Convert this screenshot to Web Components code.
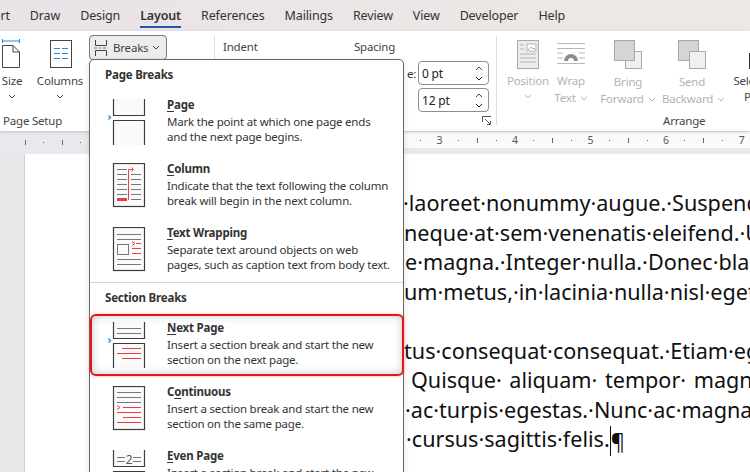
<!DOCTYPE html>
<html lang="en"><head><meta charset="utf-8"><title>Breaks menu</title>
<style>
html,body{margin:0;padding:0;width:750px;height:472px;overflow:hidden;background:#e8e8ea}
body{font-family:"Noto Sans","Open Sans",sans-serif;font-size:11.500px;letter-spacing:-.2px;color:#2e2e2e}
svg{display:block}
</style></head><body>
<word-app>
  <tab-bar>
    <tab-item style="margin-left:-24px">Insert</tab-item><tab-item>Draw</tab-item><tab-item>Design</tab-item><tab-item active>Layout</tab-item><tab-item>References</tab-item><tab-item>Mailings</tab-item><tab-item>Review</tab-item><tab-item>View</tab-item><tab-item>Developer</tab-item><tab-item>Help</tab-item>
  </tab-bar>
  <ribbon-bar>
    <ribbon-group label="Page Setup" w="215" lp="3">
      <ribbon-btn w="24"><svg slot="icon" width="24" height="30" viewBox="0 0 24 30" style="margin-top:-1px"><path d="M2.500 2h17M2.500 0v4M19.500 0v4" stroke="#2b88d8" fill="none"/><path d="M2.500 6.500H13l6.500 6.500v15.500H2.500z" fill="#fff" stroke="#444"/><path d="M13 6.500V13h6.500" fill="none" stroke="#444"/></svg>Size<chev-ron block></chev-ron></ribbon-btn>
      <ribbon-btn w="48" style="margin-left:12px"><svg slot="icon" width="24" height="28" viewBox="0 0 24 28"><rect x="2.500" y=".5" width="21" height="27" fill="#fff" stroke="#444"/><path d="M6 8.500h6M14 8.500h6M6 13.500h6M14 13.500h6M6 18.500h6M14 18.500h6" stroke="#2b88d8"/></svg>Columns<chev-ron block></chev-ron></ribbon-btn>
      <breaks-btn>Breaks</breaks-btn>
    </ribbon-group>
    <ribbon-group w="282" launcher label="">
      <spacing-panel></spacing-panel>
    </ribbon-group>
    <ribbon-group label="Arrange" w="253" lp="166" pad="7">
      <ribbon-btn w="48" disabled><svg slot="icon" width="22" height="29" viewBox="0 0 22 29"><rect x=".5" y=".5" width="21" height="28" fill="#ececec" stroke="#a8a8a8"/><rect x="10" y="4" width="9" height="7" fill="#fff" stroke="#b5b5b5"/><path d="M11 10l3-3 2 2 1-1 2 2" stroke="#b0b0b0" fill="none"/><path d="M3 5h4M3 9h4M3 14h16M3 18h16M3 22h16" stroke="#b5b5b5"/></svg>Position<chev-ron block></chev-ron></ribbon-btn>
      <ribbon-btn w="38" disabled><svg slot="icon" width="30" height="26" viewBox="0 0 30 26" style="margin-top:3px"><path d="M1 .500h28M1 5.500h28M1 10h6M1 15h6M1 20.500h28M23 10h6M23 15h6" stroke="#b8b8b8" fill="none"/><path d="M8 18a7 7 0 0 1 14 0h-4a3 3 0 0 0-6 0z" fill="#8d8d8d"/></svg>Wrap<br>Text<chev-ron></chev-ron></ribbon-btn>
      <ribbon-btn w="56" disabled style="margin-left:10px"><svg slot="icon" width="28" height="29" viewBox="0 0 28 29"><rect x="11.500" y="11.500" width="16" height="17" fill="#f0f0f0" stroke="#a8a8a8"/><rect x=".5" y=".5" width="20" height="20" fill="#d5d5d5" stroke="#a8a8a8"/></svg><span style="padding-top:1px;display:block">Bring<br>Forward<chev-ron></chev-ron></span></ribbon-btn>
      <ribbon-btn w="60" disabled style="margin-left:6px"><svg slot="icon" width="28" height="29" viewBox="0 0 28 29"><rect x=".5" y=".5" width="20" height="20" fill="#d5d5d5" stroke="#a8a8a8"/><rect x="11.500" y="11.500" width="16" height="17" fill="#f0f0f0" stroke="#a8a8a8"/></svg><span style="padding-top:1px;display:block">Send<br>Backward<chev-ron></chev-ron></span></ribbon-btn>
      <ribbon-btn w="52" style="margin-left:9px"><svg slot="icon" width="18" height="29" viewBox="0 0 18 29" style="margin-left:2px"><rect x=".5" y="13.500" width="16" height="15" fill="#fff" stroke="#333"/></svg>Selection<br>Pane</ribbon-btn>
    </ribbon-group>
  </ribbon-bar>
  <ruler-bar></ruler-bar>
  <doc-area>
    <doc-line pad="-1">·laoreet·nonummy·augue.·Suspendisse</doc-line>
    <doc-line>neque·at·sem·venenatis·eleifend.·Ut</doc-line>
    <doc-line pad="1">e·magna.·Integer·nulla.·Donec·blandit</doc-line>
    <doc-line>um·metus,·in·lacinia·nulla·nisl·eget</doc-line>
    <doc-line></doc-line>
    <doc-line>tus·consequat·consequat.·Etiam·eget</doc-line>
    <doc-line pad="7" style="word-spacing:2px">Quisque· aliquam· tempor· magna</doc-line>
    <doc-line pad="1">·ac·turpis·egestas.·Nunc·ac·magna</doc-line>
    <doc-line pad="2">·cursus·sagittis·felis.<span style="border-left:1px solid #111;display:inline-block;height:30px;line-height:30px;vertical-align:middle">¶</span></doc-line>
  </doc-area>
  <break-menu>
    <menu-head>Page Breaks</menu-head>
    <break-item h="64" key="P" rest="age" l1="Mark the point at which one page ends" l2="and the next page begins."><svg width="44" height="46" viewBox="0 0 44 46"><path d="M8.500 0h31v16h-31z" fill="#fafafa"/><path d="M8.500 0v16.500h31V0M8.500 46V21.500h31V46" fill="#fafafa" stroke="#3c3c3c" stroke-width="1.200"/><path d="M3.500 16.500l2 2-2 2" stroke="#2b88d8" stroke-width="1.300" fill="none"/></svg></break-item>
    <break-item h="64" key="C" rest="olumn" l1="Indicate that the text following the column" l2="break will begin in the next column."><svg width="44" height="46" viewBox="0 0 44 46"><rect x="8.500" y=".5" width="31" height="43" fill="#fafafa" stroke="#3c3c3c" stroke-width="1.200"/><path d="M12 6.500h10M12 11.500h10M12 16.500h10M12 21.500h10M12 26.500h10M12 31.500h10M26 11.500h10M26 16.500h10M26 21.500h10M26 26.500h10M26 31.500h10M26 36.500h10" stroke="#777"/><rect x="12" y="35" width="10" height="3" fill="#ee3b3b"/><path d="M23.500 37V6.500H28M26.500 4.500l2 2-2 2" stroke="#e84545" fill="none"/></svg></break-item>
    <break-item h="56" key="T" rest="ext Wrapping" l1="Separate text around objects on web" l2="pages, such as caption text from body text."><svg width="44" height="46" viewBox="0 0 44 46"><rect x="8.500" y=".5" width="31" height="43" fill="#fafafa" stroke="#3c3c3c" stroke-width="1.200"/><path d="M12 7.500h24M12 12.500h24M12 32.500h24M12 37.500h24" stroke="#777"/><rect x="12.500" y="17.500" width="11" height="10" fill="none" stroke="#777"/><path d="M27 14.500l3 2-3 2M31 16.500h5M27 21.500h9M27 26.500h9" stroke="#e84545" fill="none"/></svg></break-item>
    <menu-rule></menu-rule>
    <menu-head>Section Breaks</menu-head>
    <break-item h="64" highlight key="N" rest="ext Page" l1="Insert a section break and start the new" l2="section on the next page."><svg width="44" height="46" viewBox="0 0 44 46"><path d="M8.500 0v16.500h31V0M8.500 46V21.500h31V46" fill="#fafafa" stroke="#3c3c3c" stroke-width="1.200"/><path d="M12 6.500h24M12 11.500h24" stroke="#777"/><path d="M17 26.500h19M12 31.500h24M17 36.500h19" stroke="#ee3b3b"/><path d="M3.500 16.500l2 2-2 2" stroke="#2b88d8" stroke-width="1.300" fill="none"/></svg></break-item>
    <break-item h="64" key="" pre="C" mid="o" rest="ntinuous" l1="Insert a section break and start the new" l2="section on the same page."><svg width="44" height="46" viewBox="0 0 44 46"><rect x="8.500" y=".5" width="31" height="43" fill="#fafafa" stroke="#3c3c3c" stroke-width="1.200"/><path d="M12 6.500h24M12 11.500h24M12 16.500h24" stroke="#777"/><path d="M12 19.500l3 2-3 2M18 21.500h18M12 26.500h24M18 31.500h18M12 36.500h24" stroke="#ee3b3b" fill="none"/></svg></break-item>
    <break-item h="64" key="E" rest="ven Page" l1="Insert a section break and start the new" l2="section on the odd page."><svg width="44" height="46" viewBox="0 0 44 46"><path d="M8.500 0v16.500h31V0M8.500 46V21.500h31V46" fill="#fafafa" stroke="#3c3c3c" stroke-width="1.200"/><path d="M12 7.500h8M12 11.500h8M28 7.500h8M28 11.500h8" stroke="#777"/><text x="24" y="14" text-anchor="middle" font-family="Noto Sans" font-size="12" fill="#555">2</text></svg></break-item>
  </break-menu>
</word-app>
<script>
function def(name, css, html, init){
  customElements.define(name, class extends HTMLElement{
    connectedCallback(){
      if(this.shadowRoot) return;
      const s=this.attachShadow({mode:'open'});
      const h=typeof html==='function'?html(this):html;
      s.innerHTML='<style>'+css+'</style>'+h;
      if(init) init(this,s);
    }
  });
}
const chevD='<svg width="8" height="5" viewBox="0 0 8 5"><path d="M1 1l3 3 3-3" fill="none" stroke="currentColor" stroke-width="1"/></svg>';
def('word-app',':host{display:flex;flex-direction:column;position:relative;width:750px;height:472px;overflow:hidden}','<slot></slot>');
def('tab-bar',':host{display:flex;gap:20px;height:31px;flex:none;background:linear-gradient(90deg,#e9e3e8,#eee8e4);white-space:nowrap;font-size:12.500px;letter-spacing:-.14px;color:#333;padding-left:0;overflow:hidden}','<slot></slot>');
def('tab-item',':host{display:block;position:relative;line-height:31px;height:31px}:host([active]){font-weight:600;color:#333}:host([active])::after{content:"";position:absolute;left:0;right:0;top:26px;height:2px;background:#2257a8}','<slot></slot>');
def('ribbon-bar',':host{display:flex;height:100px;flex:none;background:#fff;box-shadow:0 1px 3px rgba(0,0,0,.18);position:relative;z-index:1;overflow:hidden}','<slot></slot>');
def('ribbon-group',`:host{display:flex;flex-direction:column;flex:none;box-sizing:border-box;margin:5px 0 6px;border-right:1px solid #dcdcdc}
:host(:last-child){border:none}
.row{flex:1;display:flex;min-height:0;align-items:flex-start}
.foot{height:16px;line-height:16px;margin-bottom:-4px;display:flex;justify-content:space-between;white-space:nowrap;color:#444}
.foot svg{display:block;margin:-1px 4px 0 0}`,
 h=>{const w=h.getAttribute('w');h.style.width=w+'px';
   return `<div class="row" style="padding-left:${h.getAttribute('pad')||0}px"><slot></slot></div><div class="foot" style="padding-left:${h.getAttribute('lp')||0}px"><span>${h.getAttribute('label')||''}</span>${h.hasAttribute('launcher')?'<svg width="10" height="10" viewBox="0 0 10 10" style="margin-left:auto;margin-top:3px"><path d="M.5 6V.5H9M3 3l5 5M8.500 5v3.500H5" fill="none" stroke="#555"/></svg>':''}</div>`});
def('ribbon-btn',`:host{display:block;flex:none;text-align:center;line-height:16px;white-space:nowrap;color:#444;padding-top:4px}
:host([disabled]){color:#b3b3b3}
.ic{height:33px;display:flex;justify-content:center;align-items:flex-start}`,
 h=>{h.style.width=h.getAttribute('w')+'px';return '<div class="ic"><slot name="icon"></slot></div><slot></slot>'});
def('chev-ron',`:host{display:inline-block;width:8px;margin-left:4px;vertical-align:1px}:host([block]){display:flex;justify-content:center;width:auto;margin:5px 0 0}`,chevD);
def('breaks-btn',`:host{display:flex;align-items:center;box-sizing:border-box;margin:-1px 0 0 5px;width:78px;height:25px;background:#ececec;border:1px solid #7a7a7a;border-radius:4px;color:#444;flex:none;padding-left:4px;gap:5px}
svg{display:block} .c{margin-left:-1px;display:flex}`,
 `<svg width="14" height="16" viewBox="0 0 14 16"><path d="M1.500 0v5.500h11V0M1.500 16v-5.500h11V16" fill="none" stroke="#444"/><path d="M0 8h14" stroke="#2b88d8" stroke-dasharray="3 1.500"/></svg><slot></slot><span class="c">${chevD}</span>`);
def('spacing-panel',`:host{display:flex;padding-left:8px;color:#444}
.t{line-height:22px}.a{width:131px}
.sp{display:flex;flex-direction:column;gap:3px;margin-top:3px;padding-left:53px}
.r{display:flex;align-items:center}.lab{width:11px;color:#333}`,
 `<div class="a t">Indent</div><div><div class="t">Spacing</div><div class="sp"><div class="r"><span class="lab">e:</span><spin-field>0 pt</spin-field></div><div class="r"><span class="lab"></span><spin-field>12 pt</spin-field></div></div></div>`);
def('spin-field',`:host{display:flex;align-items:center;justify-content:space-between;box-sizing:border-box;width:71px;height:24px;border:1px solid #8e8e8e;border-radius:4px;padding:0 5px 0 3px;color:#222;font-size:12px}
.s{display:flex;flex-direction:column;gap:5px}`,
 `<slot></slot><div class="s"><svg width="8" height="5" viewBox="0 0 8 5"><path d="M1 4l3-3 3 3" fill="none" stroke="#444"/></svg>${chevD}</div>`);
def('ruler-bar',`:host{display:flex;height:23px;flex:none;background:#e9e8ec}
.l{display:flex;padding-left:16px;height:23px;align-items:center;padding-top:0}
.rt{margin-left:auto;width:346px;box-sizing:border-box;height:16px;background:#fbfafa;display:flex;padding-left:7px;margin-top:1px}
.c{width:18.900px;flex:none;text-align:center;line-height:18px;font-size:10.500px;color:#555;display:flex;align-items:center;justify-content:center}
.l .c{width:18.500px;height:23px}
i{display:block;background:#666;width:1px;height:5px}i.d{height:1px}`,
 ()=>{const cell=k=>k==='|'?'<div class="c"><i></i></div>':k==='.'?'<div class="c"><i class="d"></i></div>':`<div class="c">${k}</div>`;
  return `<div class="l">${['|','.','|','.'].map(cell).join('')}</div><div class="rt">${['.',3,'.','|','.',4,'.','|','.',5,'.','|','.',6,'.','|','.',7,'.'].map(cell).join('')}</div>`});
def('doc-area',`:host{display:block;flex:1;margin-left:24px;background:#fff;border-left:1px solid #d0d0d0;padding:34px 0 0 379px;font-family:"Noto Sans",sans-serif;font-size:21.600px;letter-spacing:0;color:#111;overflow:hidden;white-space:nowrap}`,'<slot></slot>');
def('doc-line',':host{display:block;height:29.500px;line-height:29.500px}','<slot></slot>',h=>{h.style.paddingLeft=(+h.getAttribute('pad')||0)+'px'; if(+h.getAttribute('pad')<0)h.style.marginLeft=h.getAttribute('pad')+'px'});
def('break-menu',`:host{position:absolute;left:89px;top:59px;width:315px;height:420px;box-sizing:border-box;background:#fff;border:1px solid #666;border-radius:5px 5px 0 0;z-index:5;display:block;box-shadow:0 2px 6px rgba(0,0,0,.12)}`,'<slot></slot>');
def('menu-head',':host{display:block;height:30px;padding:6px 0 0 15px;line-height:18px;font-weight:700;color:#333}','<slot></slot>');
def('menu-rule',':host{display:block;height:1px;margin:2px 0 0 0;background:#d4d4d4}','');
def('break-item',`:host{display:flex;box-sizing:border-box;padding:3px 0 0 15px;position:relative}
.i{width:62px;flex:none}
.tx{margin-top:-2px;white-space:nowrap;line-height:15px;color:#333}
.ti{font-weight:700;line-height:16px;margin-bottom:1px}
u{text-underline-offset:2px}
:host([highlight])::before{content:"";position:absolute;left:0;right:-1px;top:-5px;height:62px;box-sizing:border-box;border:2px solid #e8141c;border-radius:6px;box-shadow:inset 0 0 9px rgba(0,0,0,.22),0 0 3px rgba(232,20,28,.35);pointer-events:none}`,
 h=>{h.style.height=h.getAttribute('h')+'px';const g=n=>h.getAttribute(n)||'';
  const t=g('mid')?`${g('pre')}<u>${g('mid')}</u>${g('rest')}`:`<u>${g('key')}</u>${g('rest')}`;
  return `<div class="i"><slot></slot></div><div class="tx"><div class="ti">${t}</div><div>${g('l1')}</div><div>${g('l2')}</div></div>`});
</script>
</body></html>
